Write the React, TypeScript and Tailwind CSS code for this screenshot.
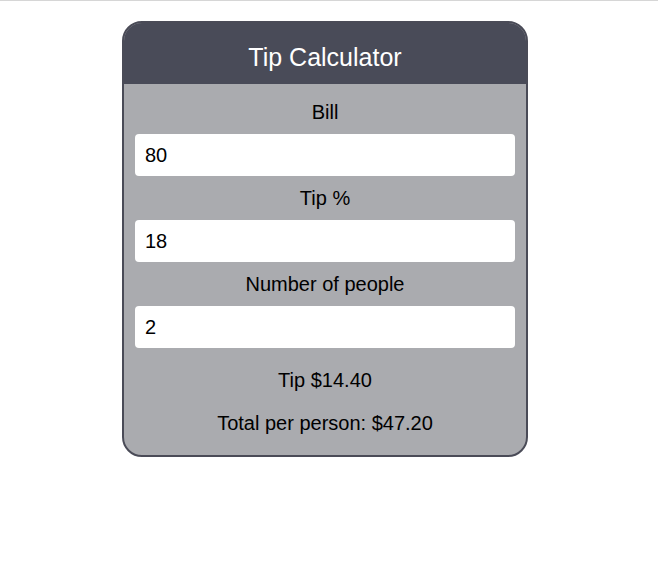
import { useState } from 'react'

export default function App() {
  const [bill, setBill] = useState('80')
  const [tip, setTip] = useState('18')
  const [people, setPeople] = useState('2')

  const b = parseFloat(bill) || 0
  const t = parseFloat(tip) || 0
  const p = parseFloat(people) || 1
  const tipAmount = (b * t) / 100
  const perPerson = (b + tipAmount) / p

  return (
    <div className="min-h-[583px] bg-white border-t border-[#d6d6d6] font-['Liberation_Sans',Arial,sans-serif]">
      <div className="ml-[122px] mt-[20px] w-[406px] rounded-[20px] border-2 border-[#4a4b57] bg-[#aaabaf] overflow-hidden">
        {/* Header */}
        <div className="h-[61px] pt-[8px] bg-[#494b58] flex items-center justify-center">
          <h1 className="text-[25px] text-white">Tip Calculator</h1>
        </div>

        {/* Felder */}
        <div className="px-[11px] pt-[17px] pb-[21px] flex flex-col">
          <Field label="Bill" value={bill} onChange={setBill} />
          <Field label="Tip %" value={tip} onChange={setTip} />
          <Field label="Number of people" value={people} onChange={setPeople} />

          <p className="mt-[10px] text-[20px] leading-[22px] text-black text-center">
            Tip ${tipAmount.toFixed(2)}
          </p>
          <p className="mt-[21px] text-[20px] leading-[22px] text-black text-center">
            Total per person: ${perPerson.toFixed(2)}
          </p>
        </div>
      </div>
    </div>
  )
}

interface FieldProps {
  label: string
  value: string
  onChange: (v: string) => void
}

function Field({ label, value, onChange }: FieldProps) {
  return (
    <div className="flex flex-col mb-[11px]">
      <label className="text-[20px] leading-[22px] text-black text-center">{label}</label>
      <input
        value={value}
        onChange={(e) => onChange(e.target.value)}
        className="mt-[11px] h-[42px] w-full rounded-[4px] bg-white px-[10px] text-[20px] text-black outline-none"
      />
    </div>
  )
}
